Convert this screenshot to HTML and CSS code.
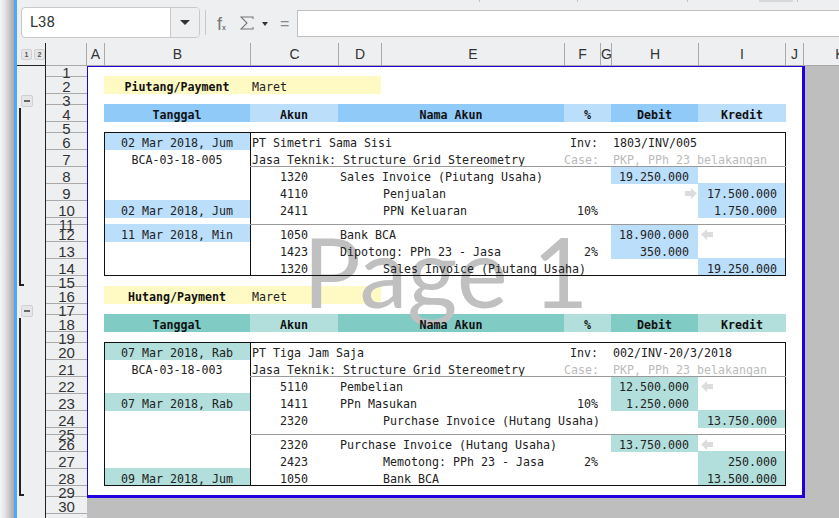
FILE: index.html
```html
<!DOCTYPE html>
<html lang="en">

<head>
    <meta charset="UTF-8">
    <meta name="viewport" content="width=device-width, initial-scale=1.0">
    <title>Jurnal</title>
    <link rel="stylesheet" href="styles.css">
</head>

<body>
    <div class="app">
        <div class="edge"></div>
        <div class="main">
            <div class="strip"><span></span><span></span><span></span><span class="strip-btn"></span><span></span></div>
            <div class="toolbar">
                <div class="namebox">
                    <div class="namebox-text">L38</div>
                    <div class="namebox-drop"><span class="caret"></span></div>
                </div>
                <div class="tool-sep"></div>
                <div class="tool-fx">f<small>x</small></div>
                <svg class="tool-sum" width="14" height="14" viewBox="0 0 14 14"><path d="M13 3V1H1l6 6-6 6h12v-2" fill="none" stroke="#777" stroke-width="1.1"/></svg>
                <span class="caret caret-small"></span>
                <div class="tool-eq">=</div>
                <div class="formula"></div>
            </div>

            <div class="sheet">
                <div class="outline">
                    <div class="outline-head">
                        <span class="level">1</span>
                        <span class="level">2</span>
                    </div>
                    <div class="group-btn group-btn-first"></div>
                    <div class="group-line group-line-first"></div>
                    <div class="group-btn group-btn-second"></div>
                    <div class="group-line group-line-second"></div>
                </div>

                <div class="grid-area">
                    <div class="col-heads">
                        <div class="corner"></div>
                        <div class="col w-a">A</div>
                        <div class="col w-b">B</div>
                        <div class="col w-c">C</div>
                        <div class="col w-d">D</div>
                        <div class="col w-e">E</div>
                        <div class="col w-f">F</div>
                        <div class="col w-g">G</div>
                        <div class="col w-h">H</div>
                        <div class="col w-i">I</div>
                        <div class="col w-j">J</div>
                        <div class="col w-k">K</div>
                    </div>
                    <div class="grid-body">
                        <div class="rows">
                            <div class="rownum short">1</div>
                            <div class="rownum">2</div>
                            <div class="rownum short">3</div>
                            <div class="rownum">4</div>
                            <div class="rownum short">5</div>
                            <div class="rownum">6</div>
                            <div class="rownum">7</div>
                            <div class="rownum">8</div>
                            <div class="rownum">9</div>
                            <div class="rownum">10</div>
                            <div class="rownum tiny">11</div>
                            <div class="rownum">12</div>
                            <div class="rownum">13</div>
                            <div class="rownum">14</div>
                            <div class="rownum short">15</div>
                            <div class="rownum">16</div>
                            <div class="rownum short">17</div>
                            <div class="rownum">18</div>
                            <div class="rownum short">19</div>
                            <div class="rownum">20</div>
                            <div class="rownum">21</div>
                            <div class="rownum">22</div>
                            <div class="rownum">23</div>
                            <div class="rownum">24</div>
                            <div class="rownum tiny">25</div>
                            <div class="rownum">26</div>
                            <div class="rownum">27</div>
                            <div class="rownum">28</div>
                            <div class="rownum short">29</div>
                            <div class="rownum">30</div>
                            <div class="rownum"></div>
                        </div>

                        <div class="canvas">
                            <div class="page">
                                <!-- Piutang -->
                                <div class="cell r2 cb yellow bold center"><span>Piutang/Payment</span></div>
                                <div class="cell r2 cc-d yellow pad"><span>Maret</span></div>

                                <div class="cell r4 cb blue-d bold center"><span>Tanggal</span></div>
                                <div class="cell r4 cc blue-l bold center"><span>Akun</span></div>
                                <div class="cell r4 cd-e blue-d bold center"><span>Nama Akun</span></div>
                                <div class="cell r4 cf-g blue-l bold center"><span>%</span></div>
                                <div class="cell r4 ch blue-d bold center"><span>Debit</span></div>
                                <div class="cell r4 ci blue-l bold center"><span>Kredit</span></div>

                                <div class="cell r6 cb blue-l center"><span>02 Mar 2018, Jum</span></div>
                                <div class="cell r6 cc pad"><span>PT Simetri Sama Sisi</span></div>
                                <div class="cell r6 cf right"><span>Inv:</span></div>
                                <div class="cell r6 ch pad"><span>1803/INV/005</span></div>

                                <div class="cell r7 cb center"><span>BCA-03-18-005</span></div>
                                <div class="cell r7 cc pad"><span>Jasa Teknik: Structure Grid Stereometry</span></div>
                                <div class="cell r7 cf right muted"><span>Case:</span></div>
                                <div class="cell r7 ch pad muted"><span>PKP, PPh 23 belakangan</span></div>

                                <div class="cell r8 cc center"><span>1320</span></div>
                                <div class="cell r8 cd pad"><span>Sales Invoice (Piutang Usaha)</span></div>
                                <div class="cell r8 ch blue-l amount"><span>19.250.000</span></div>

                                <div class="cell r9 cc center"><span>4110</span></div>
                                <div class="cell r9 ce pad"><span>Penjualan</span></div>
                                <div class="cell r9 ch arrow-right"><svg width="12" height="11" viewBox="0 0 12 11"><path d="M0 3h6V0l6 5.5-6 5.5V8H0z" fill="#dcdcdc"/></svg></div>
                                <div class="cell r9 ci blue-l amount"><span>17.500.000</span></div>

                                <div class="cell r10 cb blue-l center"><span>02 Mar 2018, Jum</span></div>
                                <div class="cell r10 cc center"><span>2411</span></div>
                                <div class="cell r10 ce pad"><span>PPN Keluaran</span></div>
                                <div class="cell r10 cf right"><span>10%</span></div>
                                <div class="cell r10 ci blue-l amount"><span>1.750.000</span></div>

                                <div class="cell r12 cb blue-l center"><span>11 Mar 2018, Min</span></div>
                                <div class="cell r12 cc center"><span>1050</span></div>
                                <div class="cell r12 cd pad"><span>Bank BCA</span></div>
                                <div class="cell r12 ch blue-l amount"><span>18.900.000</span></div>
                                <div class="cell r12 ci arrow-left"><svg width="12" height="11" viewBox="0 0 12 11"><path d="M12 3H6V0L0 5.500l6 5.500V8h6z" fill="#dcdcdc"/></svg></div>

                                <div class="cell r13 cc center"><span>1423</span></div>
                                <div class="cell r13 cd pad"><span>Dipotong: PPh 23 - Jasa</span></div>
                                <div class="cell r13 cf right"><span>2%</span></div>
                                <div class="cell r13 ch blue-l amount"><span>350.000</span></div>

                                <div class="cell r14 cc center"><span>1320</span></div>
                                <div class="cell r14 ce pad"><span>Sales Invoice (Piutang Usaha)</span></div>
                                <div class="cell r14 ci blue-l amount"><span>19.250.000</span></div>

                                <div class="frame frame-a"></div>
                                <div class="divider-v frame-a"></div>
                                <div class="divider-h r8"></div>
                                <div class="divider-h r12"></div>

                                <!-- Hutang -->
                                <div class="cell r16 cb yellow bold center"><span>Hutang/Payment</span></div>
                                <div class="cell r16 cc-d yellow pad"><span>Maret</span></div>

                                <div class="cell r18 cb teal-d bold center"><span>Tanggal</span></div>
                                <div class="cell r18 cc teal-l bold center"><span>Akun</span></div>
                                <div class="cell r18 cd-e teal-d bold center"><span>Nama Akun</span></div>
                                <div class="cell r18 cf-g teal-l bold center"><span>%</span></div>
                                <div class="cell r18 ch teal-d bold center"><span>Debit</span></div>
                                <div class="cell r18 ci teal-l bold center"><span>Kredit</span></div>

                                <div class="cell r20 cb teal-l center"><span>07 Mar 2018, Rab</span></div>
                                <div class="cell r20 cc pad"><span>PT Tiga Jam Saja</span></div>
                                <div class="cell r20 cf right"><span>Inv:</span></div>
                                <div class="cell r20 ch pad"><span>002/INV-20/3/2018</span></div>

                                <div class="cell r21 cb center"><span>BCA-03-18-003</span></div>
                                <div class="cell r21 cc pad"><span>Jasa Teknik: Structure Grid Stereometry</span></div>
                                <div class="cell r21 cf right muted"><span>Case:</span></div>
                                <div class="cell r21 ch pad muted"><span>PKP, PPh 23 belakangan</span></div>

                                <div class="cell r22 cc center"><span>5110</span></div>
                                <div class="cell r22 cd pad"><span>Pembelian</span></div>
                                <div class="cell r22 ch teal-l amount"><span>12.500.000</span></div>
                                <div class="cell r22 ci arrow-left"><svg width="12" height="11" viewBox="0 0 12 11"><path d="M12 3H6V0L0 5.500l6 5.500V8h6z" fill="#dcdcdc"/></svg></div>

                                <div class="cell r23 cb teal-l center"><span>07 Mar 2018, Rab</span></div>
                                <div class="cell r23 cc center"><span>1411</span></div>
                                <div class="cell r23 cd pad"><span>PPn Masukan</span></div>
                                <div class="cell r23 cf right"><span>10%</span></div>
                                <div class="cell r23 ch teal-l amount"><span>1.250.000</span></div>

                                <div class="cell r24 cc center"><span>2320</span></div>
                                <div class="cell r24 ce pad"><span>Purchase Invoice (Hutang Usaha)</span></div>
                                <div class="cell r24 ci teal-l amount"><span>13.750.000</span></div>

                                <div class="cell r26 cc center"><span>2320</span></div>
                                <div class="cell r26 cd pad"><span>Purchase Invoice (Hutang Usaha)</span></div>
                                <div class="cell r26 ch teal-l amount"><span>13.750.000</span></div>
                                <div class="cell r26 ci arrow-left"><svg width="12" height="11" viewBox="0 0 12 11"><path d="M12 3H6V0L0 5.500l6 5.500V8h6z" fill="#dcdcdc"/></svg></div>

                                <div class="cell r27 cc center"><span>2423</span></div>
                                <div class="cell r27 ce pad"><span>Memotong: PPh 23 - Jasa</span></div>
                                <div class="cell r27 cf right"><span>2%</span></div>
                                <div class="cell r27 ci teal-l amount"><span>250.000</span></div>

                                <div class="cell r28 cb teal-l center"><span>09 Mar 2018, Jum</span></div>
                                <div class="cell r28 cc center"><span>1050</span></div>
                                <div class="cell r28 ce pad"><span>Bank BCA</span></div>
                                <div class="cell r28 ci teal-l amount"><span>13.500.000</span></div>

                                <div class="frame frame-b"></div>
                                <div class="divider-v frame-b"></div>
                                <div class="divider-h r22"></div>
                                <div class="divider-h r26"></div>

                                <div class="watermark">Page 1</div>
                            </div>
                        </div>
                    </div>
                </div>
            </div>
        </div>
    </div>
</body>

</html>
```

FILE: styles.css
```css
* {
    margin: 0;
    padding: 0;
    box-sizing: border-box;
}

html,
body {
    width: 839px;
    height: 518px;
    overflow: hidden;
}

.app {
    display: flex;
    width: 839px;
    height: 518px;
    background: #eeeff1;
    font-family: "Liberation Sans", sans-serif;
    color: #333;
}

.edge {
    width: 17px;
    flex-shrink: 0;
    background-image: linear-gradient(to right, #f6f6f6 0, #e4e4e4 5px, #a8a8a8 14px, #4da6ff 14px, #4da6ff 17px);
}

.main {
    flex: 1;
    min-width: 0;
    display: flex;
    flex-direction: column;
}

/* strip of the toolbar above, only its bottom edge shows */
.strip {
    display: flex;
    height: 2px;
    flex-shrink: 0;
}

.strip span {
    width: 1px;
    background: #c4c4c4;
}

.strip span:nth-child(1) {
    margin-left: 462px;
}

.strip span:nth-child(2) {
    margin-left: 97px;
}

.strip span:nth-child(3) {
    margin-left: 109px;
}

.strip .strip-btn {
    width: 34px;
    margin-left: 71px;
    background: #d8d8d8;
}

.strip span:nth-child(5) {
    margin-left: 4px;
}

.toolbar {
    display: flex;
    height: 41px;
    flex-shrink: 0;
    align-items: flex-start;
}

.namebox {
    display: flex;
    width: 179px;
    height: 31px;
    margin: 5px 0 0 4px;
    background: #fff;
    border: 1px solid #c9c9c9;
    border-radius: 4px;
    overflow: hidden;
}

.namebox-text {
    flex: 1;
    padding-left: 8px;
    font-family: Roboto, sans-serif;
    font-size: 15px;
    line-height: 29px;
}

.namebox-drop {
    display: flex;
    width: 29px;
    align-items: center;
    justify-content: center;
    background: #eeeff1;
    border-left: 1px solid #c9c9c9;
}

.caret {
    width: 0;
    height: 0;
    border-left: 5px solid transparent;
    border-right: 5px solid transparent;
    border-top: 5px solid #333;
}

.caret-small {
    margin: 20px 0 0 8px;
    border-left-width: 3.5px;
    border-right-width: 3.5px;
    border-top-width: 4px;
}

.tool-sep {
    width: 1px;
    height: 25px;
    margin: 8px 0 0 5px;
    background: #c9c9c9;
}

.tool-fx {
    width: 12px;
    margin: 14px 0 0 11px;
    font-size: 18px;
    line-height: 17px;
    color: #777;
    white-space: nowrap;
}

.tool-fx small {
    font-size: 7px;
    font-weight: bold;
}

.tool-sum {
    margin: 14px 0 0 11px;
}

.tool-eq {
    width: 10px;
    margin: 13px 0 0 12px;
    font-size: 16px;
    line-height: 18px;
    color: #888;
}

.formula {
    flex: 1;
    height: 27px;
    margin: 8px 0 0 7px;
    background: #fff;
    border: 1px solid #c0c0c0;
    border-right: 0;
}

.sheet {
    flex: 1;
    display: flex;
    min-height: 0;
}

/* outline gutter */
.outline {
    width: 29px;
    flex-shrink: 0;
    border-right: 1px solid #222;
}

.outline-head {
    display: flex;
    gap: 2px;
    height: 23px;
    padding: 6px 0 0 4px;
    border-bottom: 1px solid #222;
}

.level {
    width: 11px;
    height: 11px;
    background: #e6e6e6;
    border: 1px solid #d0d0d0;
    border-radius: 2px;
    font-size: 7px;
    font-weight: bold;
    line-height: 9px;
    text-align: center;
    color: #555;
}

.group-btn {
    display: flex;
    width: 12px;
    margin-left: 4px;
    align-items: center;
    justify-content: center;
    background: #e6e6e6;
    border: 1px solid #d0d0d0;
    border-radius: 2px;
}

.group-btn::after {
    content: '';
    width: 6px;
    height: 2px;
    background: #666;
}

.group-btn-first {
    height: 12px;
    margin-top: 29px;
}

.group-btn-second {
    height: 12px;
    margin-top: 19px;
}

.group-line {
    width: 5px;
    margin: 1px 0 0 2px;
    border-left: 2px solid #222;
    border-bottom: 2px solid #222;
}

.group-line-first {
    height: 178px;
}

.group-line-second {
    height: 178px;
}

.grid-area {
    flex: 1;
    min-width: 0;
    display: flex;
    flex-direction: column;
}

.col-heads {
    display: flex;
    height: 23px;
    flex-shrink: 0;
    border-bottom: 1px solid #aaa;
}

.corner {
    width: 41px;
    flex-shrink: 0;
    border-right: 1px solid #aaa;
}

.col {
    flex-shrink: 0;
    border-right: 1px solid #aaa;
    font-size: 14px;
    line-height: 23px;
    text-align: center;
}

.w-a { width: 18px; }
.w-b { width: 146px; }
.w-c { width: 88px; }
.w-d { width: 43px; }
.w-e { width: 183px; }
.w-f { width: 36px; }
.w-g { width: 11px; }
.w-h { width: 87px; }
.w-i { width: 87px; }
.w-j { width: 18px; }
.w-k { width: 72px; border-right: 0; }

.grid-body {
    flex: 1;
    display: flex;
    min-height: 0;
}

.rows {
    width: 41px;
    flex-shrink: 0;
}

.rownum {
    display: flex;
    height: 17px;
    padding-bottom: 1px;
    align-items: flex-end;
    justify-content: center;
    border-bottom: 1px solid #aaa;
    font-size: 15px;
    line-height: 11px;
}

.rownum.short {
    height: 11px;
    padding: 1px 0 0;
    align-items: flex-start;
}

.rownum.tiny {
    height: 7px;
    padding: 1px 0 0;
    align-items: flex-start;
}

.canvas {
    flex: 1;
    min-width: 0;
    background: #bebebe;
}

.page {
    position: relative;
    display: grid;
    width: 718px;
    height: 432px;
    grid-template-columns: 16px 146px 88px 43px 183px 36px 11px 87px 88px 16px;
    grid-template-rows: 10px 17px 11px 17px 11px repeat(5, 17px) 7px repeat(3, 17px) 11px 17px 11px 17px 11px repeat(5, 17px) 7px repeat(3, 17px) 9px;
    background: #fff;
    border-style: solid;
    border-color: #2200dd;
    border-width: 1px 3px 3px 1px;
    font-family: "DejaVu Sans Mono", monospace;
    font-size: 11.63px;
    line-height: 17px;
    color: #222;
}

/* fills stay under the watermark, the text goes over it */
.cell {
    margin-top: -1px;
    padding-top: 3px;
    white-space: nowrap;
}

.cell span {
    position: relative;
    z-index: 2;
}

.r2 { grid-row: 2; }
.r4 { grid-row: 4; }
.r6 { grid-row: 6; }
.r7 { grid-row: 7; }
.r8 { grid-row: 8; }
.r9 { grid-row: 9; }
.r10 { grid-row: 10; }
.r12 { grid-row: 12; }
.r13 { grid-row: 13; }
.r14 { grid-row: 14; }
.r16 { grid-row: 16; }
.r18 { grid-row: 18; }
.r20 { grid-row: 20; }
.r21 { grid-row: 21; }
.r22 { grid-row: 22; }
.r23 { grid-row: 23; }
.r24 { grid-row: 24; }
.r26 { grid-row: 26; }
.r27 { grid-row: 27; }
.r28 { grid-row: 28; }

.cb { grid-column: 2; }
.cc { grid-column: 3; }
.cd { grid-column: 4; }
.ce { grid-column: 5; }
.cf { grid-column: 6; }
.ch { grid-column: 8; }
.ci { grid-column: 9; }
.cc-d { grid-column: 3 / 5; }
.cd-e { grid-column: 4 / 6; }
.cf-g { grid-column: 6 / 8; }

.yellow { background: #fff9c4; }
.blue-d { background: #90caf9; }
.blue-l { background: #bbdefb; }
.teal-d { background: #80cbc4; }
.teal-l { background: #b2dfdb; }

.bold {
    font-weight: bold;
    color: #111;
}

.center { text-align: center; }
.pad { padding-left: 2px; }
.muted { color: #bbb; }

.right {
    padding-right: 2px;
    text-align: right;
}

.amount {
    padding-right: 9px;
    text-align: right;
}

.arrow-right,
.arrow-left {
    display: flex;
    align-items: center;
}

.arrow-right {
    justify-content: flex-end;
    padding-right: 1px;
}

.arrow-left {
    padding-left: 3px;
}

.frame {
    position: relative;
    z-index: 2;
    margin-top: -1px;
    grid-column: 2 / 10;
    border: 1px solid #111;
}

.frame-a { grid-row: 6 / 15; }
.frame-b { grid-row: 20 / 29; }

.divider-v {
    position: relative;
    z-index: 2;
    margin-top: -1px;
    grid-column: 3;
    border-left: 1px solid #111;
}

.divider-h {
    position: relative;
    z-index: 2;
    margin-top: -1px;
    grid-column: 3 / 10;
    border-top: 1px solid #999;
}

.watermark {
    position: absolute;
    z-index: 1;
    left: 215px;
    top: 149px;
    font-family: Lato, sans-serif;
    font-size: 96.5px;
    line-height: 110px;
    color: #c0c0c0;
    white-space: nowrap;
}
```
